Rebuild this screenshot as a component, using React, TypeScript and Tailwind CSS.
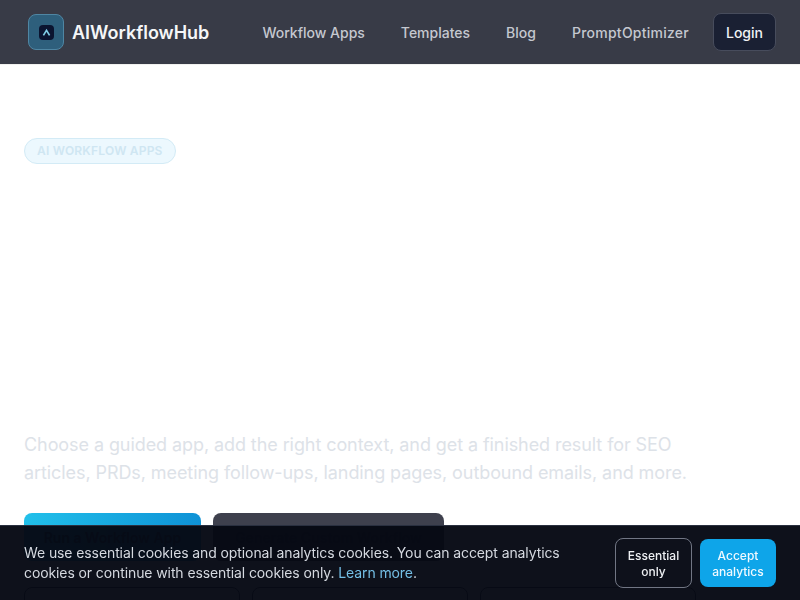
const navLinks = [
  { label: 'Workflow Apps', cls: '' },
  { label: 'Templates', cls: '' },
  { label: 'Blog', cls: '' },
  { label: 'PromptOptimizer', cls: 'tracking-[0.25px]' },
];

export default function App() {
  return (
    <div className="h-[600px] overflow-hidden bg-white font-['Inter',sans-serif]">
      {/* Header */}
      <header className="flex h-[65px] items-center justify-between border-b border-[#f1f1ef] bg-[#383b47] pl-[28px] pr-[24px]">
        <div className="flex items-center gap-[8px]">
          <div className="flex h-[36px] w-[36px] items-center justify-center rounded-[8px] border border-[#4f86a3] bg-[#2e5f7c]">
            <div className="flex h-[15px] w-[15px] items-center justify-center rounded-[4px] bg-[#0b1430]">
              <svg viewBox="0 0 10 10" className="h-[11px] w-[11px]" fill="none">
                <path d="M2.2 7.6 L5 3 L7.8 7.6" stroke="#7fcde6" strokeWidth="1.5" />
              </svg>
            </div>
          </div>
          <span className="text-[18px] font-semibold text-[#f5f6f8]">AIWorkflowHub</span>
        </div>
        <nav className="flex items-center">
          <div className="flex items-center gap-[36px]">
            {navLinks.map((link) => (
              <a key={link.label} className={`text-[14px] font-medium text-[#c5c8d0] ${link.cls}`}>
                {link.label}
              </a>
            ))}
          </div>
          <button className="ml-[24px] h-[38px] w-[63px] rounded-[8px] border border-[#474c5c] bg-[#1a2033] text-[14px] font-medium text-[#f1f3f6]">
            Login
          </button>
        </nav>
      </header>

      {/* Hero, mid fade-in */}
      <main className="px-[24px] pt-[72px]">
        <span className="inline-flex h-[26px] items-center rounded-full border border-[#d3ebf6] bg-[#ecf8fe] px-[12px] text-[12px] font-semibold tracking-[0.2px] text-[#cfe6f2]">
          AI WORKFLOW APPS
        </span>
        <div className="h-[267px]" />
        <p className="max-w-[680px] text-[18px] leading-[28px] tracking-[-0.08px] text-[#dde2e8]">
          Choose a guided app, add the right context, and get a finished result for SEO articles, PRDs, meeting follow-ups, landing pages, outbound emails, and more.
        </p>
        <div className="mt-[26px] flex gap-[12px]">
          <button className="h-[48px] w-[177px] rounded-[8px] bg-gradient-to-r from-[#22c0ea] to-[#0f92d6] text-[14px] font-semibold text-[#0b3f5c]">
            Run a Workflow App
          </button>
          <button className="h-[48px] w-[231px] rounded-[8px] bg-[#3e404d] text-[14px] font-semibold text-[#23252f]">
            Generate Custom Workflow
          </button>
        </div>
        <div className="mt-[26px] flex gap-[12px]">
          <div className="h-[60px] w-[216px] rounded-[8px] border border-[#23283a]" />
          <div className="h-[60px] w-[216px] rounded-[8px] border border-[#23283a]" />
          <div className="h-[60px] w-[216px] rounded-[8px] border border-[#23283a]" />
        </div>
      </main>

      {/* Cookie banner */}
      <div className="fixed inset-x-0 bottom-0 flex h-[75px] items-center justify-between border-t border-[#2a3040] bg-[#060914]/[0.97] pl-[24px] pr-[24px]">
        <p className="w-[560px] text-[14px] leading-[20px] tracking-[-0.1px] text-[#d5d9e0]">
          We use essential cookies and optional analytics cookies. You can accept analytics cookies or continue with essential cookies only.{' '}
          <a className="text-[#74bfe6]">Learn more</a>.
        </p>
        <div className="flex items-center gap-[8px]">
          <button className="h-[50px] w-[77px] rounded-[8px] border border-[#717684] pt-[1px] text-[12px] leading-[16px] font-medium text-[#eef0f3]">
            Essential only
          </button>
          <button className="h-[48px] w-[76px] rounded-[8px] bg-[#0ea5e9] pt-[1px] text-[12px] leading-[16px] font-medium text-[#f0f9ff]">
            Accept analytics
          </button>
        </div>
      </div>
    </div>
  );
}
